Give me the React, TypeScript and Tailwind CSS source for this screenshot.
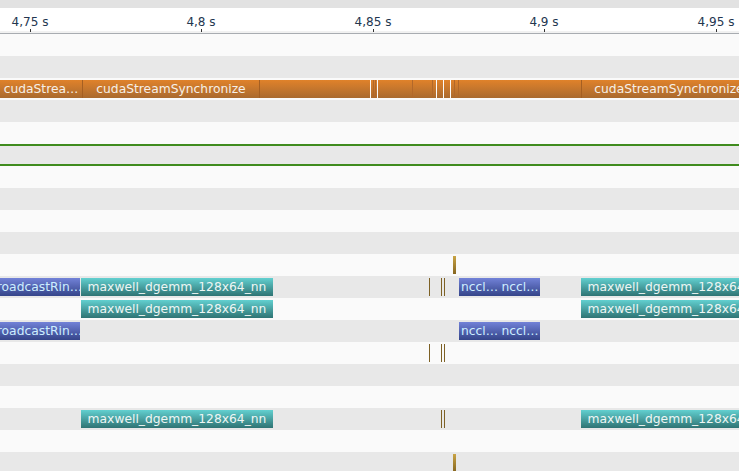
import React from "react";

const FONT = { fontFamily: '"DejaVu Sans", "Noto Sans", sans-serif' };

type Bar = { left: number; width: number; label: string; kind: "teal" | "blue" };
type Tick = { left: number; tall?: boolean };
type Row = { bars?: Bar[]; ticks?: Tick[]; orange?: boolean; green?: boolean };

const axis = [
  { x: 30, label: "4,75 s" },
  { x: 201, label: "4,8 s" },
  { x: 373, label: "4,85 s" },
  { x: 544, label: "4,9 s" },
  { x: 716, label: "4,95 s" },
];

const orangeSegs = [
  { left: 0, width: 82, label: "cudaStrea…" },
  { left: 82, width: 177, label: "cudaStreamSynchronize" },
  { left: 259, width: 111, label: "" },
  { left: 371, width: 6, label: "" },
  { left: 378, width: 58, label: "" },
  { left: 437, width: 6, label: "" },
  { left: 444, width: 6, label: "" },
  { left: 451, width: 130, label: "" },
  { left: 581, width: 175, label: "cudaStreamSynchronize" },
];

const orangeLines = [373, 375, 412, 432, 454, 458];

const dgemm = "maxwell_dgemm_128x64_nn";
const smallTicks = [429, 441, 444];

const ncclPair: Bar[] = [
  { left: 459, width: 41, label: "nccl…", kind: "blue" },
  { left: 500, width: 40, label: "nccl…", kind: "blue" },
];
const broadcast: Bar = { left: -9, width: 89, label: "broadcastRin…", kind: "blue" };
const dgemmPair: Bar[] = [
  { left: 81, width: 192, label: dgemm, kind: "teal" },
  { left: 581, width: 192, label: dgemm, kind: "teal" },
];

const rows: Row[] = [
  {},
  {},
  { orange: true },
  {},
  {},
  { green: true },
  {},
  {},
  {},
  {},
  { ticks: [{ left: 453, tall: true }] },
  {
    bars: [broadcast, ...dgemmPair, ...ncclPair],
    ticks: smallTicks.map((left) => ({ left })),
  },
  { bars: dgemmPair },
  { bars: [broadcast, ...ncclPair] },
  { ticks: smallTicks.map((left) => ({ left })) },
  {},
  {},
  { bars: dgemmPair, ticks: [{ left: 441 }, { left: 444 }] },
  {},
  { ticks: [{ left: 453, tall: true }] },
];

const TimelineBar = ({ bar }: { bar: Bar }) => (
  <div
    className={
      "absolute top-[2px] h-[18px] flex items-center justify-center overflow-hidden whitespace-nowrap text-[12.3px] " +
      (bar.kind === "teal"
        ? "bg-gradient-to-b from-[#62d0d0] to-[#2f7474] text-[#eef6f4]"
        : "bg-gradient-to-b from-[#7282d8] to-[#35458a] text-[#cdeeff]")
    }
    style={{ left: bar.left, width: bar.width }}
  >
    {bar.label}
  </div>
);

const TimelineTick = ({ tick }: { tick: Tick }) =>
  tick.tall ? (
    <div
      className="absolute top-[2px] h-[18px] w-[3px] bg-gradient-to-b from-[#c9a445] to-[#86661f]"
      style={{ left: tick.left }}
    />
  ) : (
    <div
      className="absolute top-[2px] h-[18px] w-px bg-[#7d6125]"
      style={{ left: tick.left }}
    />
  );

const OrangeTrack = () => (
  <div className="absolute left-0 right-0 top-[2px] h-[18px] overflow-hidden">
    {orangeSegs.map((s, i) => (
      <div
        key={i}
        className={
          "absolute top-0 h-full flex items-center justify-center whitespace-nowrap overflow-hidden text-[12.3px] text-[#f6efe6] bg-gradient-to-b from-[#e0822a] to-[#aa6a2e]" +
          (i === 1 || i === 2 || i === 8 ? " border-l border-[#a55f22]" : "")
        }
        style={{ left: s.left, width: s.width }}
      >
        {s.label}
      </div>
    ))}
    {orangeLines.map((x) => (
      <div
        key={x}
        className="absolute top-0 h-full w-px bg-[#b2682a]"
        style={{ left: x }}
      />
    ))}
  </div>
);

export default function App() {
  return (
    <div className="w-[739px] h-[471px] overflow-hidden bg-[#fafafa] flex flex-col" style={FONT}>
      <div className="h-[8px] bg-[#e2e2e2] shrink-0" />
      <div className="relative h-[23px] bg-white shrink-0">
        {axis.map((a) => (
          <React.Fragment key={a.label}>
            <div
              className="absolute top-[7px] w-[60px] -ml-[30px] text-center text-[12px] leading-[14px] text-[#243650]"
              style={{ left: a.x }}
            >
              {a.label}
            </div>
            <div className="absolute top-[21px] h-[3px] w-px bg-[#333]" style={{ left: a.x }} />
          </React.Fragment>
        ))}
      </div>
      <div className="h-[2px] bg-[#f1f1f1] shrink-0" />
      <div className="h-px bg-[#a8acb1] shrink-0" />
      {rows.map((r, i) => (
        <div
          key={i}
          className={
            "relative h-[22px] shrink-0 " + (i % 2 === 0 ? "bg-[#fafafa]" : "bg-[#e8e8e8]")
          }
        >
          {r.green && (
            <>
              <div className="absolute top-0 left-0 right-0 h-[2px] bg-[#3f8b1e]" />
              <div className="absolute bottom-0 left-0 right-0 h-[2px] bg-[#3f8b1e]" />
            </>
          )}
          {r.orange && <OrangeTrack />}
          {r.ticks?.map((t, j) => <TimelineTick key={j} tick={t} />)}
          {r.bars?.map((b, j) => <TimelineBar key={j} bar={b} />)}
        </div>
      ))}
    </div>
  );
}
